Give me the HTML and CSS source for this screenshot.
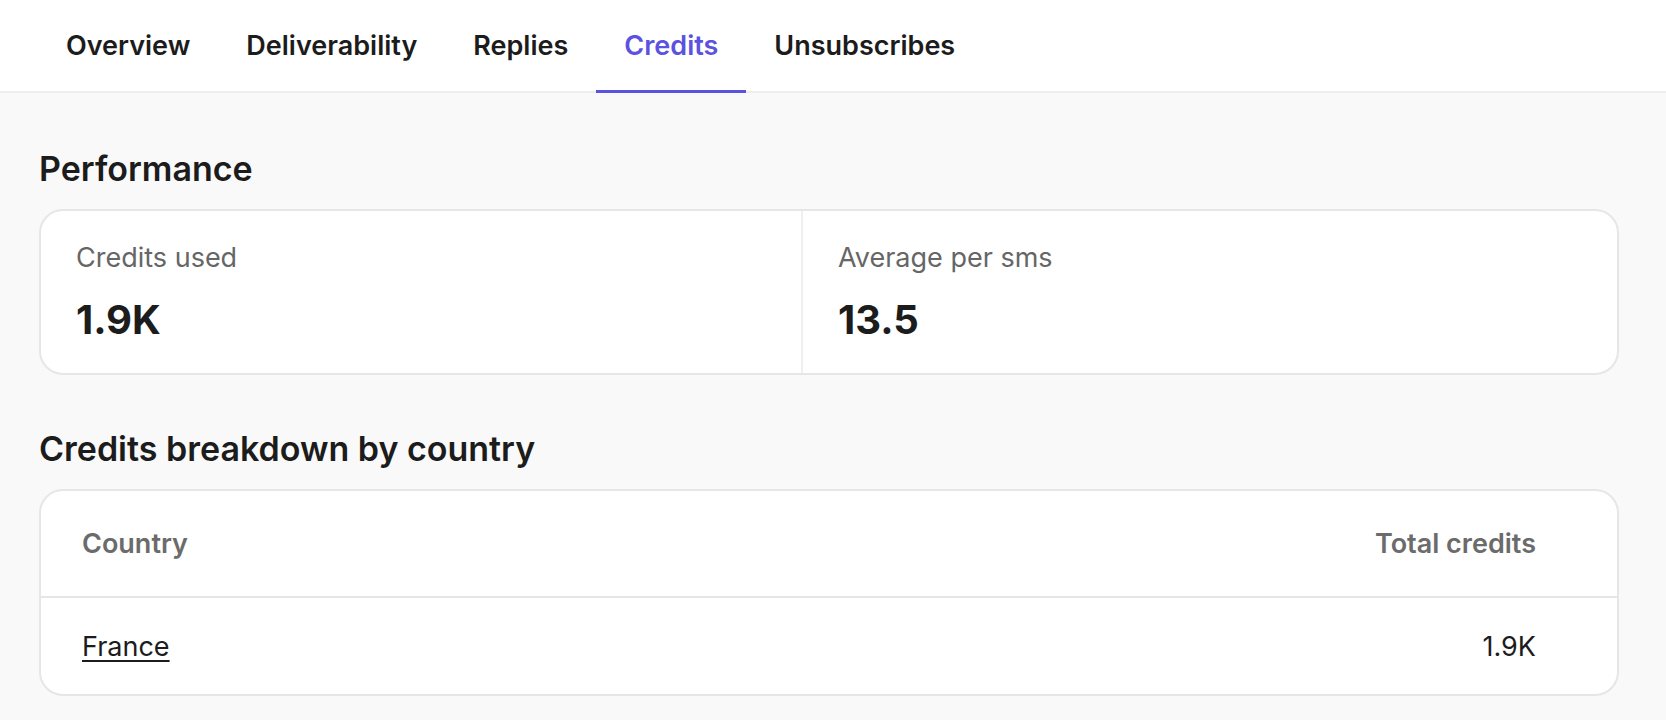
FILE: index.html
```html
<!DOCTYPE html>
<html lang="en">
<head>
    <meta charset="UTF-8">
    <meta name="viewport" content="width=device-width, initial-scale=1.0">
    <title>Campaign report - Credits</title>
    <link rel="stylesheet" href="styles.css">
</head>
<body>
    <nav class="tabs">
        <a class="tab" href="#">Overview</a>
        <a class="tab" href="#">Deliverability</a>
        <a class="tab" href="#">Replies</a>
        <a class="tab active" href="#">Credits</a>
        <a class="tab" href="#">Unsubscribes</a>
    </nav>

    <main class="content">
        <section class="section">
            <h2 class="sectionTitle">Performance</h2>
            <div class="card stats">
                <div class="stat">
                    <span class="statLabel">Credits used</span>
                    <span class="statValue">1.9K</span>
                </div>
                <div class="stat">
                    <span class="statLabel">Average per sms</span>
                    <span class="statValue">13.5</span>
                </div>
            </div>
        </section>

        <section class="section">
            <h2 class="sectionTitle">Credits breakdown by country</h2>
            <div class="card">
                <table class="breakdown">
                    <thead>
                        <tr>
                            <th>Country</th>
                            <th class="num">Total credits</th>
                        </tr>
                    </thead>
                    <tbody>
                        <tr>
                            <td><a class="countryLink" href="#">France</a></td>
                            <td class="num">1.9K</td>
                        </tr>
                    </tbody>
                </table>
            </div>
        </section>
    </main>
</body>
</html>
```

FILE: styles.css
```css
body {
    font-family: Inter, 'Noto Sans', sans-serif;
    background-color: #f9f9f9;
    color: #1c1c1c;
    margin: 0;
    padding: 0;
}

.tabs {
    display: flex;
    height: 91px;
    padding-left: 38px;
    background-color: #ffffff;
    border-bottom: 2px solid #eeeeee;
}

.tab {
    position: relative;
    display: flex;
    align-items: center;
    padding: 0 28px;
    font-size: 27px;
    font-weight: 600;
    color: #1c1c1c;
    text-decoration: none;
}

.tab.active {
    color: #5b52e0;
}

.tab.active::after {
    content: "";
    position: absolute;
    left: 0;
    right: 0;
    bottom: -2px;
    height: 3px;
    background-color: #5b52e0;
}

.content {
    padding: 0 47px 0 39px;
}

.section {
    margin-top: 55px;
}

.section + .section {
    margin-top: 53px;
}

.sectionTitle {
    margin: 0 0 20px;
    font-size: 34px;
    line-height: 41px;
    font-weight: 600;
    color: #1c1c1c;
}

.card {
    background-color: #ffffff;
    border: 2px solid #e6e6e6;
    border-radius: 24px;
    overflow: hidden;
}

.stats {
    display: grid;
    grid-template-columns: 760px 1fr;
}

.stat {
    display: flex;
    flex-direction: column;
    gap: 19px;
    padding: 30px 35px 28px;
}

.stat + .stat {
    border-left: 2px solid #efefef;
}

.statLabel {
    font-size: 27px;
    line-height: 34px;
    color: #666666;
}

.statValue {
    font-size: 40px;
    line-height: 51px;
    font-weight: 700;
    color: #1c1c1c;
}

.breakdown {
    width: 100%;
    border-collapse: collapse;
    font-size: 27px;
}

.breakdown th,
.breakdown td {
    padding: 0 0 0 41px;
    text-align: left;
}

.breakdown th {
    height: 105px;
    font-weight: 600;
    color: #6b6b6b;
    border-bottom: 2px solid #e6e6e6;
}

.breakdown td {
    height: 96px;
    color: #1c1c1c;
}

.breakdown .num {
    text-align: right;
    padding: 0 81px 0 0;
}

.countryLink {
    color: #1c1c1c;
    text-decoration: underline;
    text-underline-offset: 4px;
}
```
